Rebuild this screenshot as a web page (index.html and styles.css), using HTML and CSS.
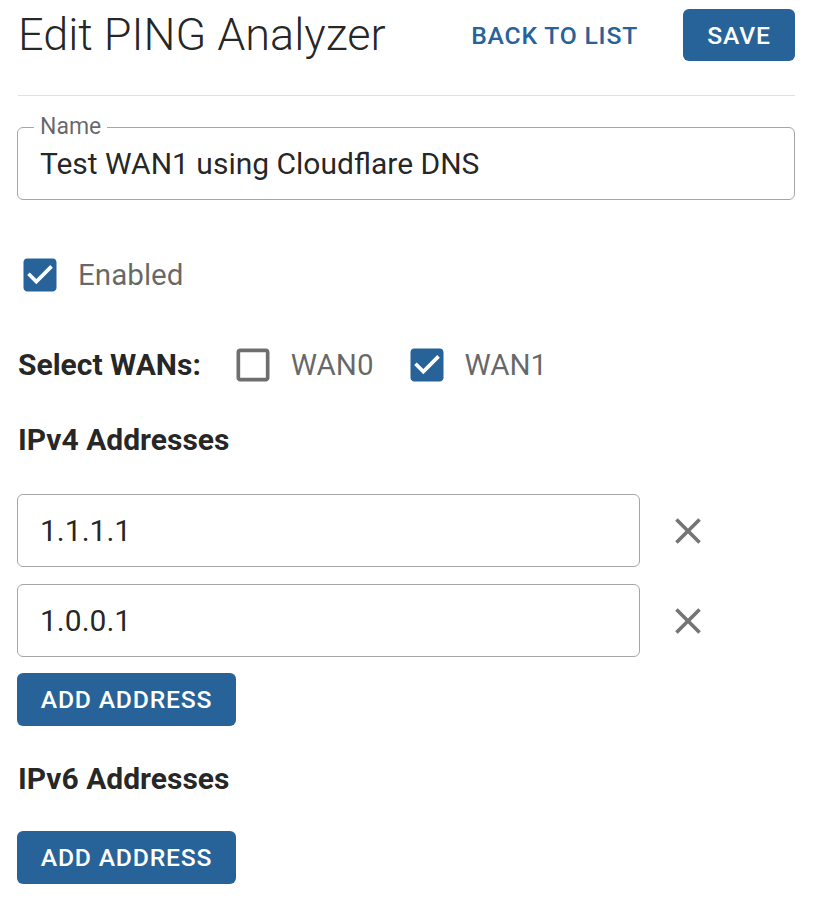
FILE: index.html
```html
<!DOCTYPE html>
<html>
<head>
<meta charset="utf-8">
<link rel="stylesheet" href="styles.css">
</head>
<body>
<div class="page">
  <header class="header">
    <h1 class="title">Edit PING Analyzer</h1>
    <div class="actions">
      <button class="btn btn-text">BACK TO LIST</button>
      <button class="btn btn-primary btn-save">SAVE</button>
    </div>
  </header>
  <hr class="divider">

  <div class="field field-name">
    <span class="field-label">Name</span>
    <span class="field-value">Test WAN1 using Cloudflare DNS</span>
  </div>

  <label class="check-row enabled-row">
    <svg class="cb cb-checked" viewBox="0 0 24 24"><path d="M19 3H5c-1.11 0-2 .9-2 2v14c0 1.1.89 2 2 2h14c1.11 0 2-.9 2-2V5c0-1.1-.89-2-2-2zm-9 14l-5-5 1.41-1.41L10 14.170l7.59-7.59L19 8l-9 9z"/></svg>
    <span class="check-label">Enabled</span>
  </label>

  <div class="wan-row">
    <span class="wan-title">Select WANs:</span>
    <label class="check-row">
      <svg class="cb cb-empty" viewBox="0 0 24 24"><path d="M19 5v14H5V5h14m0-2H5c-1.1 0-2 .9-2 2v14c0 1.1.9 2 2 2h14c1.1 0 2-.9 2-2V5c0-1.1-.9-2-2-2z"/></svg>
      <span class="check-label">WAN0</span>
    </label>
    <label class="check-row">
      <svg class="cb cb-checked" viewBox="0 0 24 24"><path d="M19 3H5c-1.11 0-2 .9-2 2v14c0 1.1.89 2 2 2h14c1.11 0 2-.9 2-2V5c0-1.1-.89-2-2-2zm-9 14l-5-5 1.41-1.41L10 14.17l7.59-7.59L19 8l-9 9z"/></svg>
      <span class="check-label">WAN1</span>
    </label>
  </div>

  <h2 class="section-title ipv4">IPv4 Addresses</h2>

  <div class="addr-list">
    <div class="addr-row">
      <div class="field field-addr"><span class="field-value">1.1.1.1</span></div>
      <svg class="close" viewBox="0 0 24 24"><path d="M19 6.41L17.59 5 12 10.59 6.41 5 5 6.41 10.59 12 5 17.59 6.41 19 12 13.41 17.59 19 19 17.59 13.41 12z"/></svg>
    </div>
    <div class="addr-row">
      <div class="field field-addr"><span class="field-value">1.0.0.1</span></div>
      <svg class="close" viewBox="0 0 24 24"><path d="M19 6.41L17.59 5 12 10.59 6.41 5 5 6.41 10.59 12 5 17.59 6.41 19 12 13.41 17.59 19 19 17.59 13.41 12z"/></svg>
    </div>
  </div>
  <button class="btn btn-primary btn-add">ADD ADDRESS</button>

  <h2 class="section-title ipv6">IPv6 Addresses</h2>
  <button class="btn btn-primary btn-add btn-add6">ADD ADDRESS</button>
</div>
</body>
</html>
```
FILE: styles.css
```css
* { box-sizing: border-box; }
html, body { margin: 0; padding: 0; background: #fff; }
body {
  font-family: Roboto, "Noto Sans", "Liberation Sans", sans-serif;
  color: rgba(0,0,0,0.87);
}
.page {
  width: 815px;
  padding: 9px 20px 0 17px;
}
.header {
  display: flex;
  align-items: center;
  justify-content: space-between;
  height: 52px;
}
.title {
  margin: 0 0 0 1px;
  font-weight: 300;
  font-size: 45px;
  line-height: 52px;
  color: rgba(0,0,0,0.87);
}
.actions {
  display: flex;
  align-items: center;
  gap: 25px;
}
.btn {
  font-family: Roboto, "Noto Sans", sans-serif;
  font-weight: 500;
  font-size: 24.7px;
  letter-spacing: 0.8px;
  border: none;
  border-radius: 6px;
  cursor: pointer;
  padding: 0;
}
.btn-text {
  background: transparent;
  color: #276299;
  height: 52px;
  padding: 0 20px;
}
.btn-primary {
  background: #276299;
  color: #fff;
}
.btn-save {
  width: 112px;
  height: 52px;
}
.divider {
  margin: 34px 0 0 1px;
  border: none;
  border-top: 1px solid #e0e0e0;
  height: 0;
}
.field {
  position: relative;
  border: 1px solid #a6a6a6;
  border-radius: 6px;
  height: 73px;
  display: flex;
  align-items: center;
  padding-left: 22px;
  font-size: 30px;
}
.field-name {
  margin-top: 31px;
}
.field-label {
  position: absolute;
  left: 16px;
  top: -14px;
  padding: 0 6px;
  background: #fff;
  font-size: 23px;
  line-height: 26px;
  color: rgba(0,0,0,0.6);
}
.field-value {
  color: rgba(0,0,0,0.87);
}
.check-row {
  display: flex;
  align-items: center;
  gap: 16px;
}
.cb {
  width: 44px;
  height: 44px;
  display: block;
  flex: none;
}
.cb-checked { fill: #276299; }
.cb-empty { fill: #6e6e6e; }
.check-label {
  font-size: 29.6px;
  line-height: 36px;
  color: rgba(0,0,0,0.6);
}
.enabled-row {
  margin-top: 53px;
  margin-left: 1px;
}
.wan-row {
  display: flex;
  align-items: center;
  margin-top: 46px;
  margin-left: 1px;
}
.wan-title {
  font-weight: 700;
  font-size: 30px;
  line-height: 36px;
  margin-right: 30px;
}
.wan-row .check-row + .check-row {
  margin-left: 31px;
}
.section-title {
  margin: 0 0 0 1px;
  font-weight: 700;
  font-size: 30px;
  line-height: 36px;
}
.ipv4 { margin-top: 35px; }
.addr-list {
  display: flex;
  flex-direction: column;
  gap: 17px;
  margin-top: 36px;
}
.addr-row {
  display: flex;
  align-items: center;
  gap: 26px;
}
.field-addr {
  width: 623px;
}
.close {
  width: 44px;
  height: 44px;
  fill: #757575;
  flex: none;
}
.btn-add {
  margin-top: 16px;
  width: 219px;
  height: 53px;
  display: block;
}
.ipv6 { margin-top: 35px; }
.btn-add6 { margin-top: 34px; }
```
